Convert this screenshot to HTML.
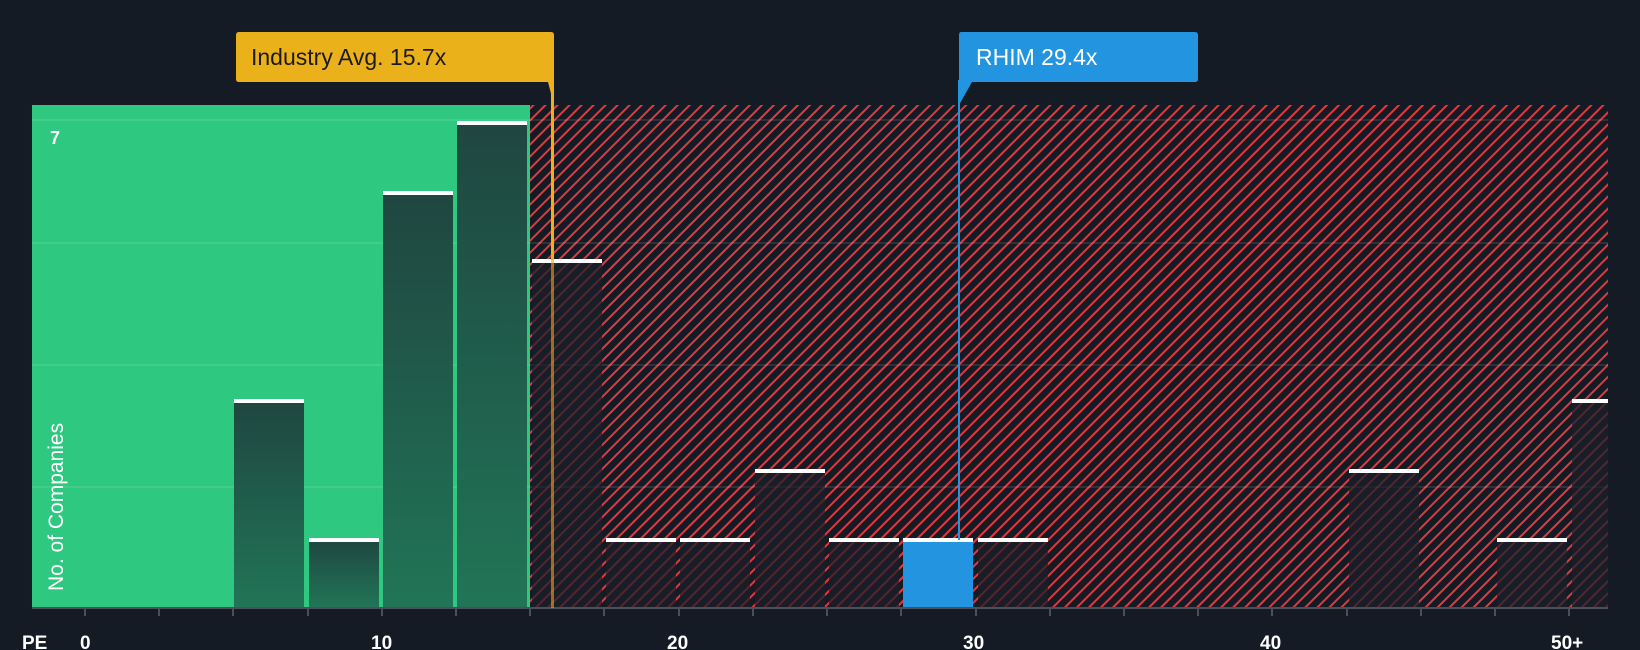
<!DOCTYPE html>
<html><head><style>
html,body{margin:0;padding:0;background:#151b24;}
svg{display:block;}
text{font-family:"Liberation Sans",sans-serif;}
</style></head><body>
<svg width="1640" height="650" viewBox="0 0 1640 650" xmlns="http://www.w3.org/2000/svg">
<defs>
<pattern id="h" patternUnits="userSpaceOnUse" width="8.5" height="8.5" patternTransform="rotate(45)">
<rect width="8.5" height="8.5" fill="#151b24"/>
<rect x="0" y="0" width="2" height="8.5" fill="#e0393e"/>
</pattern>
<linearGradient id="g" x1="0" y1="0" x2="0" y2="1">
<stop offset="0" stop-color="#1f4640"/><stop offset="1" stop-color="#217557"/>
</linearGradient>
</defs>
<rect width="1640" height="650" fill="#151b24"/>
<rect x="530" y="105" width="1078" height="503" fill="url(#h)"/>
<rect x="32" y="105" width="498" height="503" fill="#2ec880"/>
<g stroke="rgba(255,255,255,0.1)" stroke-width="2">
<line x1="32" y1="120" x2="1608" y2="120"/>
<line x1="32" y1="243" x2="1608" y2="243"/>
<line x1="32" y1="365" x2="1608" y2="365"/>
<line x1="32" y1="487" x2="1608" y2="487"/>
</g>
<g>
<rect x="234" y="400" width="70" height="208" fill="url(#g)"/><rect x="234" y="399" width="70" height="4" fill="#fff"/>
<rect x="309" y="539" width="70" height="69" fill="url(#g)"/><rect x="309" y="538" width="70" height="4" fill="#fff"/>
<rect x="383" y="192" width="70" height="416" fill="url(#g)"/><rect x="383" y="191" width="70" height="4" fill="#fff"/>
<rect x="457" y="122" width="70" height="486" fill="url(#g)"/><rect x="457" y="121" width="70" height="4" fill="#fff"/>
</g>
<g fill="rgba(28,30,40,0.72)">
<rect x="532" y="261" width="70" height="347"/>
<rect x="606" y="539" width="70" height="69"/>
<rect x="680" y="539" width="70" height="69"/>
<rect x="755" y="470" width="70" height="138"/>
<rect x="829" y="539" width="70" height="69"/>
<rect x="978" y="539" width="70" height="69"/>
<rect x="1349" y="470" width="70" height="138"/>
<rect x="1497" y="539" width="70" height="69"/>
<rect x="1572" y="400" width="36" height="208"/>
</g>
<rect x="903" y="539" width="70" height="69" fill="#2394e0"/>
<g fill="#fff">
<rect x="532" y="259" width="70" height="4"/>
<rect x="606" y="538" width="70" height="4"/>
<rect x="680" y="538" width="70" height="4"/>
<rect x="755" y="469" width="70" height="4"/>
<rect x="829" y="538" width="70" height="4"/>
<rect x="903" y="538" width="70" height="4"/>
<rect x="978" y="538" width="70" height="4"/>
<rect x="1349" y="469" width="70" height="4"/>
<rect x="1497" y="538" width="70" height="4"/>
<rect x="1572" y="399" width="36" height="4"/>
</g>
<line x1="32" y1="608" x2="1608" y2="608" stroke="#4a4f58" stroke-width="2"/>
<g stroke="#4a4f58" stroke-width="2">
<line x1="85" y1="608" x2="85" y2="616"/><line x1="159" y1="608" x2="159" y2="616"/><line x1="233" y1="608" x2="233" y2="616"/><line x1="308" y1="608" x2="308" y2="616"/><line x1="382" y1="608" x2="382" y2="616"/><line x1="456" y1="608" x2="456" y2="616"/><line x1="530" y1="608" x2="530" y2="616"/><line x1="604" y1="608" x2="604" y2="616"/><line x1="679" y1="608" x2="679" y2="616"/><line x1="753" y1="608" x2="753" y2="616"/><line x1="827" y1="608" x2="827" y2="616"/><line x1="901" y1="608" x2="901" y2="616"/><line x1="976" y1="608" x2="976" y2="616"/><line x1="1050" y1="608" x2="1050" y2="616"/><line x1="1124" y1="608" x2="1124" y2="616"/><line x1="1198" y1="608" x2="1198" y2="616"/><line x1="1272" y1="608" x2="1272" y2="616"/><line x1="1347" y1="608" x2="1347" y2="616"/><line x1="1421" y1="608" x2="1421" y2="616"/><line x1="1495" y1="608" x2="1495" y2="616"/><line x1="1569" y1="608" x2="1569" y2="616"/>
</g>
<g fill="#fff" font-size="19" font-weight="bold">
<text x="22" y="649">PE</text>
<text x="80" y="649">0</text>
<text x="371" y="649">10</text>
<text x="667" y="649">20</text>
<text x="963" y="649">30</text>
<text x="1260" y="649">40</text>
<text x="1551" y="649">50+</text>
</g>
<text x="50" y="144" fill="#fff" font-size="18" font-weight="bold">7</text>
<text transform="translate(63,591) rotate(-90)" fill="#fff" font-size="21">No. of Companies</text>
<rect x="551" y="105" width="3" height="503" fill="#e9a91a" opacity="0.6"/>
<rect x="551" y="80" width="3" height="180" fill="#eab21a"/>
<path d="M239 32 H551 Q554 32 554 35 V105 L548 82 H239 Q236 82 236 79 V35 Q236 32 239 32Z" fill="#ebb11a"/>
<text x="251" y="65" fill="#1b1b1b" font-size="23">Industry Avg. 15.7x</text>
<rect x="958" y="80" width="2" height="460" fill="#2394e0"/>
<path d="M961 32 H1195 Q1198 32 1198 35 V79 Q1198 82 1195 82 H972 L959 105 V35 Q959 32 961 32Z" fill="#2394e0"/>
<text x="976" y="65" fill="#fff" font-size="23">RHIM 29.4x</text>
</svg>
</body></html>
